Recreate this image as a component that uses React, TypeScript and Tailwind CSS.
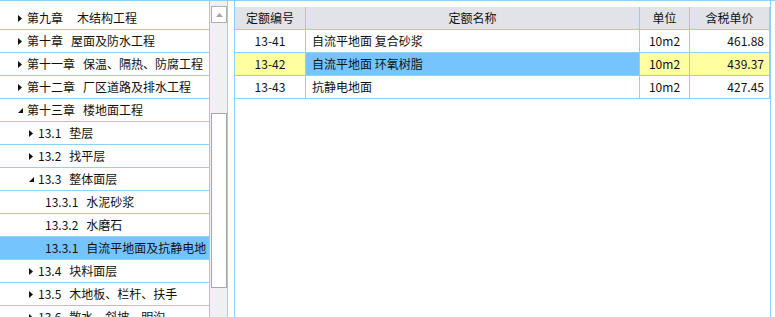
import React from "react";

type Node = {
  level: 0 | 1 | 2;
  num: string;
  name: string;
  state?: "open" | "closed";
  gap?: string;
  selected?: boolean;
};

const tree: Node[] = [
  { level: 0, num: "第九章", name: "木结构工程", state: "closed", gap: "ml-[14px]" },
  { level: 0, num: "第十章", name: "屋面及防水工程", state: "closed" },
  { level: 0, num: "第十一章", name: "保温、隔热、防腐工程", state: "closed" },
  { level: 0, num: "第十二章", name: "厂区道路及排水工程", state: "closed" },
  { level: 0, num: "第十三章", name: "楼地面工程", state: "open" },
  { level: 1, num: "13.1", name: "垫层", state: "closed" },
  { level: 1, num: "13.2", name: "找平层", state: "closed" },
  { level: 1, num: "13.3", name: "整体面层", state: "open" },
  { level: 2, num: "13.3.1", name: "水泥砂浆" },
  { level: 2, num: "13.3.2", name: "水磨石" },
  { level: 2, num: "13.3.1", name: "自流平地面及抗静电地", selected: true },
  { level: 1, num: "13.4", name: "块料面层", state: "closed" },
  { level: 1, num: "13.5", name: "木地板、栏杆、扶手", state: "closed" },
  { level: 1, num: "13.6", name: "散水、斜坡、明沟", state: "closed" },
];

const rows = [
  { code: "13-41", name: "自流平地面 复合砂浆", unit: "10m2", price: "461.88" },
  { code: "13-42", name: "自流平地面 环氧树脂", unit: "10m2", price: "439.37", selected: true },
  { code: "13-43", name: "抗静电地面", unit: "10m2", price: "427.45" },
];

function Arrow({ state }: { state?: "open" | "closed" }) {
  if (state === "closed")
    return (
      <svg width="4" height="7" viewBox="0 0 4 7" className="shrink-0">
        <polygon points="0,0 4,3.5 0,7" fill="#111" />
      </svg>
    );
  return (
    <svg width="5" height="5" viewBox="0 0 5 5" className="shrink-0">
      <polygon points="5,0 5,5 0,5" fill="#111" />
    </svg>
  );
}

function TreeRow({ n }: { n: Node }) {
  const pad = n.level === 0 ? "pl-[18px]" : n.level === 1 ? "pl-[29px]" : "pl-[45px]";
  return (
    <div
      className={`flex h-[23px] shrink-0 items-center whitespace-nowrap border-b border-[#8fd0f8] ${pad} ${
        n.selected ? "bg-[#76c4fd]" : ""
      }`}
    >
      {n.state && (
        <span className="flex w-[9px] shrink-0 items-center">
          <Arrow state={n.state} />
        </span>
      )}
      <span>{n.num}</span>
      <span className={n.gap ?? "ml-2"}>{n.name}</span>
    </div>
  );
}

export default function App() {
  const line = "border-[#8fd0f8]";
  return (
    <div
      className={`flex h-[317px] w-[775px] overflow-hidden border-t ${line} bg-white text-[12px] text-[#111]`}
      style={{ fontFamily: '"Noto Sans CJK SC", "Noto Sans", sans-serif' }}
    >
      {/* tree */}
      <div className={`flex w-[210px] shrink-0 flex-col overflow-hidden border-r ${line} pt-[6px]`}>
        {tree.map((n, i) => (
          <TreeRow key={i} n={n} />
        ))}
      </div>

      {/* scrollbar */}
      <div className={`flex w-[18px] shrink-0 flex-col bg-[#f0f0f0] border-r ${line} pt-[5px] pl-px`}>
        <div className="flex h-[17px] w-[16px] items-center justify-center border border-[#b0b0b0] bg-white">
          <svg width="7" height="4" viewBox="0 0 7 4">
            <polygon points="3.5,0 7,4 0,4" fill="#a6a6a6" />
          </svg>
        </div>
        <div className="mt-[90px] h-[175px] w-[16px] border border-[#a8a8a8] bg-white" />
      </div>

      <div className="w-[6px] shrink-0" />

      {/* table */}
      <div className={`w-[537px] shrink-0 border-x ${line} pt-[6px]`}>
        <div className="grid grid-cols-[71px_334px_50px_80px]">
          {["定额编号", "定额名称", "单位", "含税单价"].map((h) => (
            <div
              key={h}
              className={`flex h-[23px] items-center justify-center border-r border-b ${line} bg-[#e1e3e8]`}
            >
              {h}
            </div>
          ))}
          {rows.map((r) => {
            const y = r.selected ? "bg-[#ffffa0]" : "";
            return (
              <React.Fragment key={r.code}>
                <div className={`flex h-[23px] items-center justify-center border-r border-b ${line} ${y}`}>
                  {r.code}
                </div>
                <div
                  className={`flex h-[23px] items-center border-r border-b ${line} pl-[6px] ${
                    r.selected ? "bg-[#76c4fd]" : ""
                  }`}
                >
                  {r.name}
                </div>
                <div className={`flex h-[23px] items-center justify-center border-r border-b ${line} ${y}`}>
                  {r.unit}
                </div>
                <div className={`flex h-[23px] items-center justify-end border-r border-b ${line} pr-[5px] ${y}`}>
                  {r.price}
                </div>
              </React.Fragment>
            );
          })}
        </div>
      </div>
    </div>
  );
}
